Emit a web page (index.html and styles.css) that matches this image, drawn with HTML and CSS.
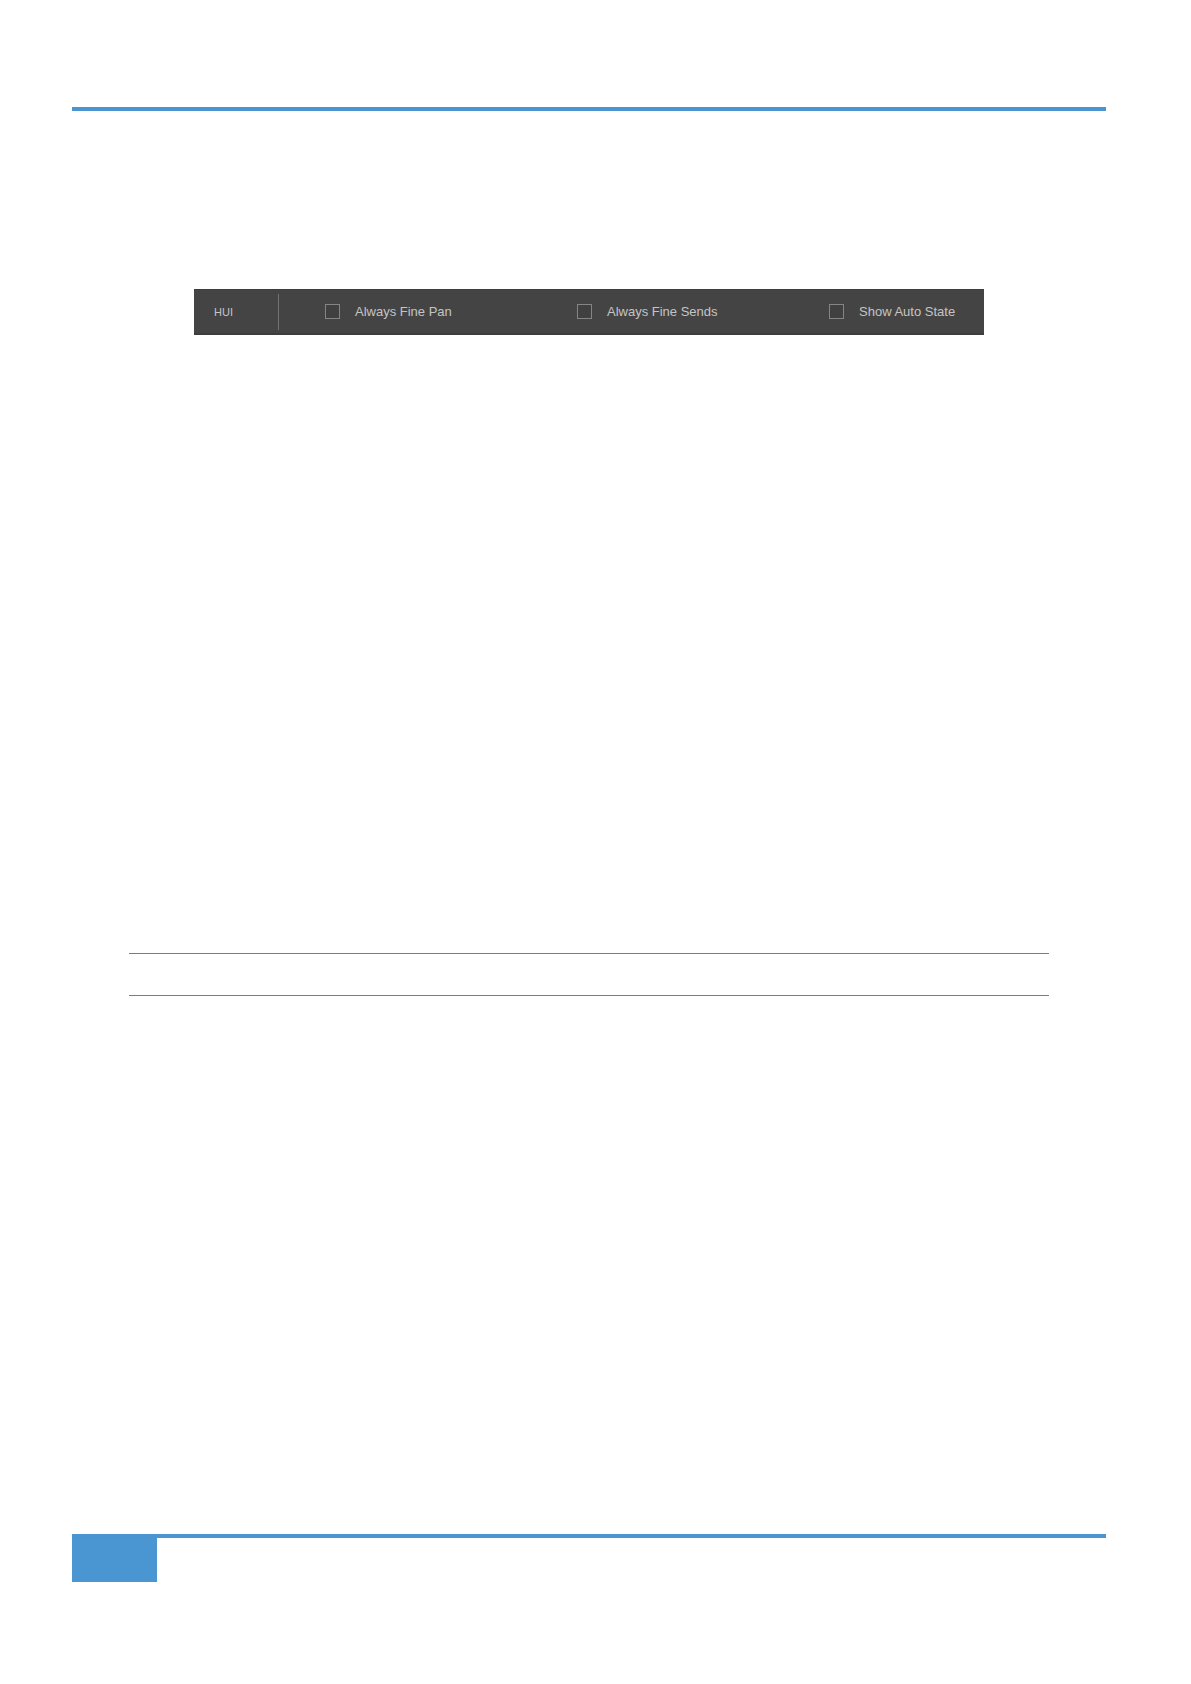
FILE: index.html
```
<!DOCTYPE html>
<html lang="en">
<head>
  <meta charset="UTF-8">
  <title>HUI</title>
  <meta name="viewport" content="width=device-width, initial-scale=1">
  <link rel="stylesheet" href="styles.css">
</head>
<body>
  <div class="page">
    <header class="page-header"></header>

    <main class="content">
      <form class="panel">
        <div class="panel-name">HUI</div>
        <div class="options">
          <label class="option"><input type="checkbox" name="fine-pan">Always Fine Pan</label>
          <label class="option"><input type="checkbox" name="fine-sends">Always Fine Sends</label>
          <label class="option"><input type="checkbox" name="auto-state">Show Auto State</label>
        </div>
      </form>

      <div class="band"></div>
    </main>

    <footer class="page-footer">
      <div class="page-tab"></div>
    </footer>
  </div>
</body>
</html>
```

FILE: styles.css
```
* { box-sizing: border-box; }
body { margin: 0; background: #fff; font-family: "Liberation Sans", Arial, sans-serif; }

.page {
  display: flex;
  flex-direction: column;
  min-height: 100vh;
  padding: 107px 85px 102px 72px;
}

.page-header { border-top: 4px solid #4a94d0; }

.content { flex: 1; padding: 178px 57px 0; }

/* settings strip */
.panel {
  display: flex;
  align-items: center;
  height: 46px;
  margin: 0 65px;
  padding-left: 20px;
  background: #444;
  border: solid #3d3d3d;
  border-width: 1px 0 2px;
  color: #c4c4c4;
}
.panel-name {
  width: 65px;
  border-right: 1px solid #727272;
  font-size: 11px;
  line-height: 36px;
}
.options {
  flex: 1;
  display: grid;
  grid-template-columns: 252px 252px auto;
  padding-left: 46px;
}
.option {
  display: flex;
  align-items: center;
  gap: 15px;
  font-size: 13px;
  white-space: nowrap;
}
.option input {
  appearance: none;
  width: 15px;
  height: 15px;
  margin: 0;
  border: 1px solid #858585;
  background: #404040;
}
.option input:checked { background: #c4c4c4; }

.band {
  height: 43px;
  margin-top: 618px;
  border: solid #4a8ab4;
  border-width: 1px 0;
}

.page-footer { border-top: 4px solid #4a94d0; }
.page-tab { width: 85px; height: 44px; background: #4a96d2; }
```
